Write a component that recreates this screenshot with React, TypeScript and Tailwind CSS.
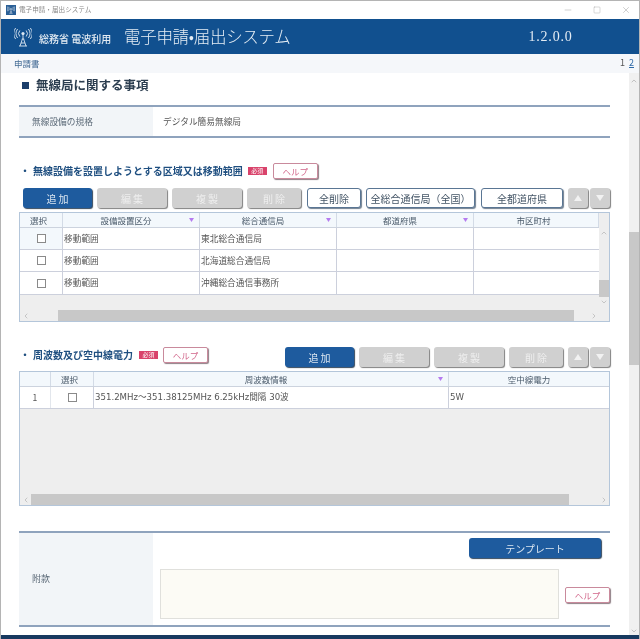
import { ChevronDown, ChevronLeft, ChevronRight, ChevronUp, Minus, Square, X } from "lucide-react";

const font = { fontFamily: '"Noto Sans CJK JP", "Noto Sans", sans-serif' };

const AntennaIcon = ({ size = 18, color = "#dce8f3" }: { size?: number; color?: string }) => (
  <svg width={size} height={(size * 20) / 18} viewBox="0 0 18 20" fill="none" stroke={color} strokeWidth="0.9">
    <circle cx="9" cy="6.5" r="1.6" fill={color} stroke="none" />
    <path d="M9 7v5M7.8 12h2.4M6 19l2.4-7M12 19l-2.4-7M7 16h4M5 19h8" />
    <path d="M5.8 3.5a4.5 4.5 0 0 0 0 6M12.2 3.5a4.5 4.5 0 0 1 0 6" />
    <path d="M3.6 2a7 7 0 0 0 0 9M14.4 2a7 7 0 0 1 0 9" />
    <path d="M1.6 1a9.5 9.5 0 0 0 0 11M16.4 1a9.5 9.5 0 0 1 0 11" />
  </svg>
);

const SortMark = () => (
  <svg width="5" height="4" viewBox="0 0 5 4" className="shrink-0">
    <path d="M0 0h5L2.5 4z" fill="#b57bf0" />
  </svg>
);

const Primary = ({ label, width }: { label: string; width: string }) => (
  <button className={`${width} h-5 shrink-0 rounded-[3px] bg-[#1e5b9e] text-[10px] text-[#dbe6f1] shadow-[1px_1px_1px_#33475c]`}>
    {label}
  </button>
);

const Disabled = ({ label, width }: { label: string; width: string }) => (
  <button className={`${width} h-5 shrink-0 rounded-[3px] bg-[#d0d0d0] text-[10px] text-[#eeeeee] shadow-[1px_1px_1px_#808080]`}>
    {label}
  </button>
);

const Outline = ({ label, width }: { label: string; width: string }) => (
  <button className={`${width} h-5 shrink-0 rounded-[3px] border border-[#5a7694] bg-white text-[10px] text-[#445566] shadow-[1px_1px_1px_#6f7f90] [text-spacing-trim:space-all]`}>
    {label}
  </button>
);

const Help = () => (
  <button className="flex h-4 w-[45px] shrink-0 items-center justify-center rounded-[2px] border border-[#c98a9c] bg-white text-[8.5px] text-[#d1668a] shadow-[1px_1px_1px_#8f7f85]">
    ヘルプ
  </button>
);

const Required = () => (
  <span className="flex h-2 w-[19px] shrink-0 items-center justify-center bg-[#d9436b] text-[6px] leading-none text-white">必須</span>
);

const Arrows = () => (
  <div className="flex gap-[2px]">
    <button className="flex h-5 w-5 items-center justify-center rounded-[3px] bg-[#d0d0d0] shadow-[1px_1px_1px_#808080]">
      <svg width="8" height="6" viewBox="0 0 8 6"><path d="M4 0l4 6H0z" fill="#f2f2f2" /></svg>
    </button>
    <button className="flex h-5 w-5 items-center justify-center rounded-[3px] bg-[#d0d0d0] shadow-[1px_1px_1px_#808080]">
      <svg width="8" height="6" viewBox="0 0 8 6"><path d="M0 0h8L4 6z" fill="#f2f2f2" /></svg>
    </button>
  </div>
);

const Check = () => <span className="block h-[9px] w-[9px] border border-[#8a8a8a] bg-white" />;

const HeadCell = ({ label, width, sort }: { label: string; width: string; sort?: boolean }) => (
  <div className={`${width} flex h-[14px] shrink-0 items-center border-r border-[#d3dbe6] pr-[5px] text-[8.5px] text-[#4a5a6a]`}>
    <span className="flex-1 text-center">{label}</span>
    {sort && <SortMark />}
  </div>
);

const rows = ["東北総合通信局", "北海道総合通信局", "沖縄総合通信事務所"];

const RangeTable = () => (
  <div className="mt-[4px] flex h-[110px] w-[591px] flex-col border border-[#b4c6da] bg-[#eeeeee]">
    <div className="flex flex-1">
      <div className="w-[579px] shrink-0">
        <div className="flex border-b border-[#ccd3de] bg-[#f3f8fc]">
          <HeadCell label="選択" width="w-[43px]" />
          <HeadCell label="設備設置区分" width="w-[137px]" sort />
          <HeadCell label="総合通信局" width="w-[137px]" sort />
          <HeadCell label="都道府県" width="w-[137px]" sort />
          <HeadCell label="市区町村" width="w-[125px]" />
        </div>
        {rows.map((name, i) => (
          <div key={name} className={`flex ${i === 2 ? "h-[23px]" : "h-[22px]"} border-b border-[#ccd0dc] bg-white text-[8.7px] text-[#555555]`}>
            <div className={`flex w-[43px] items-center justify-center border-r border-[#ccd0dc] ${i === 0 ? "bg-[#f3f8fc]" : ""}`}><Check /></div>
            <div className="flex w-[137px] items-center border-r border-[#ccd0dc] pl-[1px]">移動範囲</div>
            <div className="flex w-[137px] items-center border-r border-[#ccd0dc] pl-[1px]">{name}</div>
            <div className="w-[137px] border-r border-[#ccd0dc]" />
            <div className="w-[125px]" />
          </div>
        ))}
      </div>
      <div className="flex w-[10px] flex-col items-center bg-[#eeeeee] pt-[16px]">
        <ChevronUp size={8} className="text-[#b0b0b0]" />
        <div className="mt-[43px] h-[17px] w-full bg-[#c8c8c8]" />
        <ChevronDown size={8} className="mt-[1px] text-[#b0b0b0]" />
      </div>
    </div>
    <div className="flex h-[11px] items-center">
      <div className="flex w-[38px] items-center bg-[#eeeeee]"><ChevronLeft size={8} className="ml-[2px] text-[#b0b0b0]" /></div>
      <div className="h-full w-[516px] bg-[#c8c8c8]" />
      <div className="flex flex-1 justify-end pr-[11px]"><ChevronRight size={8} className="text-[#b0b0b0]" /></div>
    </div>
  </div>
);

const FrequencyTable = () => (
  <div className="mt-[4px] flex h-[135px] w-[591px] flex-col border border-[#b4c6da] bg-[#eeeeee]">
    <div className="flex border-b border-[#ccd3de] bg-[#f3f8fc]">
      <HeadCell label="" width="w-[31px]" />
      <HeadCell label="選択" width="w-[43px]" />
      <HeadCell label="周波数情報" width="w-[355px]" sort />
      <div className="flex h-[14px] flex-1 items-center justify-center text-[8.5px] text-[#4a5a6a]">空中線電力</div>
    </div>
    <div className="flex h-[22px] border-b border-[#ccd0dc] bg-white text-[8.6px] text-[#555555]">
      <div className="flex w-[31px] items-center justify-center border-r border-[#e2e6ec]">1</div>
      <div className="flex w-[43px] items-center justify-center border-r border-[#ccd0dc]"><Check /></div>
      <div className="flex w-[355px] items-center border-r border-[#ccd0dc] pl-[1px]" style={{ fontFamily: '"DejaVu Sans", "Noto Sans CJK JP", sans-serif' }}>351.2MHz～351.38125MHz 6.25kHz間隔 30波</div>
      <div className="flex flex-1 items-center pl-[1px]" style={{ fontFamily: '"DejaVu Sans", "Noto Sans CJK JP", sans-serif' }}>5W</div>
    </div>
    <div className="flex-1" />
    <div className="flex h-[11px] items-center">
      <div className="flex w-[11px] items-center justify-center bg-[#eeeeee]"><ChevronLeft size={8} className="text-[#b0b0b0]" /></div>
      <div className="h-full w-[538px] bg-[#c8c8c8]" />
      <div className="flex flex-1 justify-end pr-[1px]"><ChevronRight size={8} className="text-[#b0b0b0]" /></div>
    </div>
  </div>
);

const SectionTitle = ({ label }: { label: string }) => (
  <h3 className="flex items-center text-[10px] font-bold leading-none text-[#1f4f80]">
    <span className="w-[14px] pl-[1px]">・</span>
    <span className="whitespace-nowrap">{label}</span>
  </h3>
);

export default function App() {
  return (
    <div style={font} className="flex h-[639px] w-[640px] flex-col overflow-hidden border-x border-t border-[#b4b4b4] bg-white blur-[0.3px]">
      {/* title bar */}
      <div className="flex h-[18px] shrink-0 items-center bg-white pl-[5px]">
        <span className="flex h-[10px] w-[10px] items-center justify-center bg-[#2a5f96]">
          <AntennaIcon size={8} color="#ffffff" />
        </span>
        <span className="ml-[3px] flex-1 text-[6.6px] text-[#8a8a8a]">電子申請・届出システム</span>
        <div className="flex items-center gap-[20px] pr-[8px] text-[#a0a0a0]">
          <Minus size={10} strokeWidth={1.2} />
          <Square size={8} strokeWidth={1.2} />
          <X size={10} strokeWidth={1.2} />
        </div>
      </div>

      {/* header */}
      <header className="flex h-[35px] shrink-0 items-center bg-[#11508f] pl-[13px] text-white">
        <AntennaIcon />
        <span className="ml-[7px] mt-[3px] w-[85px] whitespace-nowrap text-[10px] font-medium text-[#e3ebf3]">総務省 電波利用</span>
        <span className="text-[16.5px] font-light tracking-[-0.3px] text-[#e6eef5]">電子申請•届出システム</span>
        <span className="ml-[238px] text-[14px] tracking-[0.8px] text-[#e3ebf3]" style={{ fontFamily: '"Liberation Serif", serif' }}>1.2.0.0</span>
      </header>

      {/* tabs */}
      <div className="flex h-[19px] shrink-0 items-center justify-between bg-[#f5f7fa] pl-[13px] pr-[5px] text-[8.5px] text-[#426a94]">
        <span>申請書</span>
        <span className="flex gap-[4px] pb-[2px] text-[9px]">
          <span className="text-[#555555]">1</span>
          <span className="text-[#2f6aa8] underline">2</span>
        </span>
      </div>

      <div className="flex h-[562px] shrink-0">
        <main className="w-[628px] shrink-0 overflow-hidden pl-[18px]">
          <h2 className="flex h-[32px] items-center pb-[8px] pl-[3px] text-[12.5px] font-bold text-[#2c3e50]">
            <span className="mr-[7px] h-[7px] w-[7px] bg-[#1c3f6b]" />
            無線局に関する事項
          </h2>

          <div className="flex h-[33px] w-[591px] border-y-2 border-[#8fa3bd] text-[8.7px]">
            <div className="flex w-[134px] items-center bg-[#f2f5f8] pl-[13px] text-[#5c6a78]">無線設備の規格</div>
            <div className="flex items-center pl-[10px] text-[#555555]">デジタル簡易無線局</div>
          </div>

          {/* range section */}
          <div className="mt-[24px] flex h-[18px] items-center">
            <SectionTitle label="無線設備を設置しようとする区域又は移動範囲" />
            <span className="ml-[5px] mr-[6px]"><Required /></span>
            <Help />
          </div>
          <div className="mt-[8px] flex h-5 w-[591px] items-start pl-[4px]">
            <div className="flex gap-[5px]">
              <Primary label="追 加" width="w-[69px]" />
              <Disabled label="編 集" width="w-[70px]" />
              <Disabled label="複 製" width="w-[70px]" />
              <Disabled label="削 除" width="w-[54px]" />
            </div>
            <div className="ml-[6px] flex gap-[5px]">
              <Outline label="全削除" width="w-[54px]" />
              <Outline label="全総合通信局（全国）" width="w-[109px]" />
            </div>
            <div className="ml-[6px] flex">
              <Outline label="全都道府県" width="w-[82px]" />
            </div>
            <div className="ml-[5px]"><Arrows /></div>
          </div>
          <RangeTable />

          {/* frequency section */}
          <div className="mt-[25px] flex h-5 w-[591px] items-start">
            <div className="mt-[2px] flex h-[11px] items-center">
              <SectionTitle label="周波数及び空中線電力" />
              <span className="ml-[6px] mr-[5px]"><Required /></span>
            </div>
            <Help />
            <div className="ml-auto flex gap-[5px]">
              <Primary label="追 加" width="w-[69px]" />
              <Disabled label="編 集" width="w-[70px]" />
              <Disabled label="複 製" width="w-[70px]" />
              <Disabled label="削 除" width="w-[54px]" />
            </div>
            <div className="ml-[5px]"><Arrows /></div>
          </div>
          <FrequencyTable />

          {/* notes */}
          <div className="mt-[25px] flex h-[96px] w-[591px] border-y-2 border-[#8fa3bd]">
            <div className="flex w-[134px] items-center bg-[#f2f5f8] pl-[13px] text-[9px] text-[#5c6a78]">附款</div>
            <div className="flex flex-1 flex-col pl-[7px] pt-[5px]">
              <div className="flex justify-end pr-[9px]">
                <button className="h-5 w-[132px] rounded-[3px] bg-[#1e5b9e] text-[10px] text-[#dbe6f1] shadow-[1px_1px_1px_#33475c]">テンプレート</button>
              </div>
              <div className="mt-[11px] flex items-end gap-[6px]">
                <div className="h-[50px] w-[399px] border border-[#e0e0dc] bg-[#fcfbf5]" />
                <div className="pb-[16px]"><Help /></div>
              </div>
            </div>
          </div>
        </main>

        {/* page scrollbar */}
        <div className="flex flex-1 flex-col items-center bg-[#f0f0f0] pt-[4px]">
          <ChevronUp size={8} className="text-[#a8a8a8]" />
          <div className="mt-[147px] h-[134px] w-full bg-[#c8c8c8]" />
          <ChevronDown size={8} className="mt-[262px] text-[#a8a8a8]" />
        </div>
      </div>
      <div className="h-[4px] shrink-0 bg-[#17395f]" />
    </div>
  );
}
